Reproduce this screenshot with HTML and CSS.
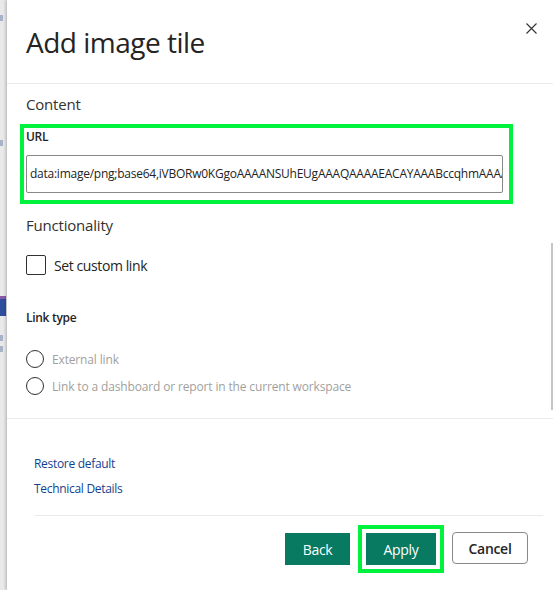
FILE: index.html
```html
<!DOCTYPE html>
<html lang="en">
<head>
    <meta charset="UTF-8">
    <meta name="viewport" content="width=device-width, initial-scale=1.0">
    <title>Add image tile</title>
    <link rel="stylesheet" href="styles.css">
</head>
<body>
    <!-- Page behind the side panel, only a sliver is visible -->
    <div class="backdrop">
        <span class="peek peek-top"></span>
        <span class="peek peek-mid"></span>
        <span class="peek-bar"></span>
        <span class="peek peek-low"></span>
        <span class="peek"></span>
    </div>

    <div class="panel">
        <div class="panel-header">
            <h1>Add image tile</h1>
            <button class="close-btn" aria-label="Close">
                <svg width="11" height="11" viewBox="0 0 11 11">
                    <path d="M0.5 0.5 L10.5 10.5 M10.5 0.5 L0.5 10.5" stroke="#323130" stroke-width="1.1" fill="none"/>
                </svg>
            </button>
        </div>

        <div class="panel-body">
            <div class="panel-scroll">
                <h2>Content</h2>
                <div class="highlight-field">
                    <label class="field-label" for="url">URL</label>
                    <div class="text-input" id="url">data:image/png;base64,iVBORw0KGgoAAAANSUhEUgAAAQAAAAEACAYAAABccqhmAAAA</div>
                </div>

                <h2 class="section-gap">Functionality</h2>
                <div class="check-row">
                    <span class="checkbox"></span>
                    <span>Set custom link</span>
                </div>

                <div class="field-label link-type">Link type</div>
                <div class="radio-row">
                    <span class="radio"></span>
                    <span>External link</span>
                </div>
                <div class="radio-row">
                    <span class="radio"></span>
                    <span>Link to a dashboard or report in the current workspace</span>
                </div>
            </div>
            <div class="scroll-track"><div class="scroll-thumb"></div></div>
        </div>

        <div class="panel-footer">
            <a class="footer-link" href="#">Restore default</a>
            <a class="footer-link" href="#">Technical Details</a>
            <div class="button-row">
                <button class="btn btn-primary">Back</button>
                <button class="btn btn-primary btn-marked">Apply</button>
                <button class="btn btn-default">Cancel</button>
            </div>
        </div>
    </div>
</body>
</html>
```

FILE: styles.css
```css
/* Basic reset and font setup */
* {
    margin: 0;
    padding: 0;
    box-sizing: border-box;
}
body {
    font-family: "Open Sans", "Noto Sans", Arial, sans-serif;
    color: #252423;
    background-color: #ffffff;
    display: flex;
    height: 590px;
    overflow: hidden;
}

/* Sliver of the report behind the panel */
.backdrop {
    width: 7px;
    flex-shrink: 0;
    background-color: #e9e9e9;
    display: flex;
    flex-direction: column;
    overflow: hidden;
}
.peek {
    width: 3px;
    height: 6px;
    background-color: #a9b3c7;
}
.peek-top {
    margin-top: 15px;
}
.peek-mid {
    margin-top: 119px;
}
.peek-bar {
    margin-top: 150px;
    height: 20px;
    width: 6px;
    background: linear-gradient(#8a5aa8 0 3px, #2f4f9e 3px);
}
.peek-low {
    margin-top: 19px;
}
.peek-low + .peek {
    margin-top: 5px;
}

/* Side panel */
.panel {
    flex: 1;
    min-width: 0;
    display: flex;
    flex-direction: column;
    background-color: #ffffff;
    box-shadow: -1px 0 3px rgba(0, 0, 0, 0.25);
}

.panel-header {
    height: 84px;
    flex-shrink: 0;
    display: flex;
    justify-content: space-between;
    align-items: flex-start;
    padding: 24px 16px 0 19px;
    border-bottom: 1px solid #edebe9;
}
h1 {
    font-size: 28px;
    font-weight: 400;
    line-height: 36px;
    color: #252423;
    letter-spacing: -0.5px;
}
.close-btn {
    border: none;
    background: none;
    margin-top: -2px;
    cursor: pointer;
}

/* Scrollable content area */
.panel-body {
    height: 335px;
    flex-shrink: 0;
    display: flex;
    border-bottom: 1px solid #edebe9;
    overflow: hidden;
}
.panel-scroll {
    flex: 1;
    min-width: 0;
    padding: 9px 48px 0 19px;
}
.scroll-track {
    width: 2px;
}
.scroll-thumb {
    margin-top: 159px;
    height: 167px;
    background-color: #c8c6c4;
}

h2 {
    font-size: 15px;
    font-weight: 400;
    line-height: 22px;
    color: #323130;
    letter-spacing: -0.2px;
}
.section-gap {
    margin-top: 10px;
}

/* Annotated field */
.highlight-field {
    margin: 9px -10px 0 -6px;
    border: 4px solid #00f23d;
    padding: 0 6px 7px 2px;
}
.field-label {
    display: block;
    font-size: 12px;
    font-weight: 600;
    line-height: 16px;
    color: #252423;
    letter-spacing: -0.3px;
}
.highlight-field .field-label {
    margin-top: 1px;
}
.text-input {
    margin-top: 10px;
    height: 38px;
    border: 1px solid #8a8886;
    border-radius: 2px;
    padding: 0 3px;
    font-size: 12px;
    line-height: 36px;
    white-space: nowrap;
    overflow: hidden;
    color: #252423;
    letter-spacing: -0.25px;
}

/* Checkbox and radios */
.check-row {
    margin-top: 19px;
    display: flex;
    align-items: center;
    gap: 8px;
    font-size: 14px;
    letter-spacing: -0.4px;
    color: #252423;
}
.checkbox {
    width: 20px;
    height: 20px;
    border: 1px solid #323130;
    border-radius: 2px;
}
.link-type {
    margin-top: 35px;
}
.radio-row {
    margin-top: 9px;
    display: flex;
    align-items: center;
    gap: 8px;
    font-size: 12px;
    color: #a19f9d;
    letter-spacing: -0.15px;
}
.link-type + .radio-row {
    margin-top: 24px;
}
.radio {
    width: 18px;
    height: 18px;
    border: 1px solid #323130;
    border-radius: 50%;
}

/* Footer */
.panel-footer {
    flex: 1;
    display: flex;
    flex-direction: column;
    align-items: flex-start;
    padding: 37px 10px 0 27px;
}
.footer-link {
    font-size: 12px;
    line-height: 16px;
    color: #123f8e;
    text-decoration: none;
    letter-spacing: -0.3px;
}
.footer-link + .footer-link {
    margin-top: 9px;
}
.button-row {
    align-self: stretch;
    margin-top: 18px;
    border-top: 1px solid #edebe9;
    padding: 17px 15px 0 0;
    display: flex;
    justify-content: flex-end;
    gap: 16px;
}
.btn {
    height: 32px;
    font-family: inherit;
    font-size: 14px;
    letter-spacing: -0.3px;
    cursor: pointer;
}
.btn-primary {
    border: none;
    background-color: #077a61;
    color: #ffffff;
    width: 65px;
}
.btn-marked {
    width: 70px;
    outline: 4px solid #00f23d;
    outline-offset: 4px;
}
.btn-default {
    width: 76px;
    margin-top: -1px;
    border: 1px solid #8a8886;
    border-radius: 4px;
    background-color: #ffffff;
    color: #252423;
    font-weight: 600;
}
```
